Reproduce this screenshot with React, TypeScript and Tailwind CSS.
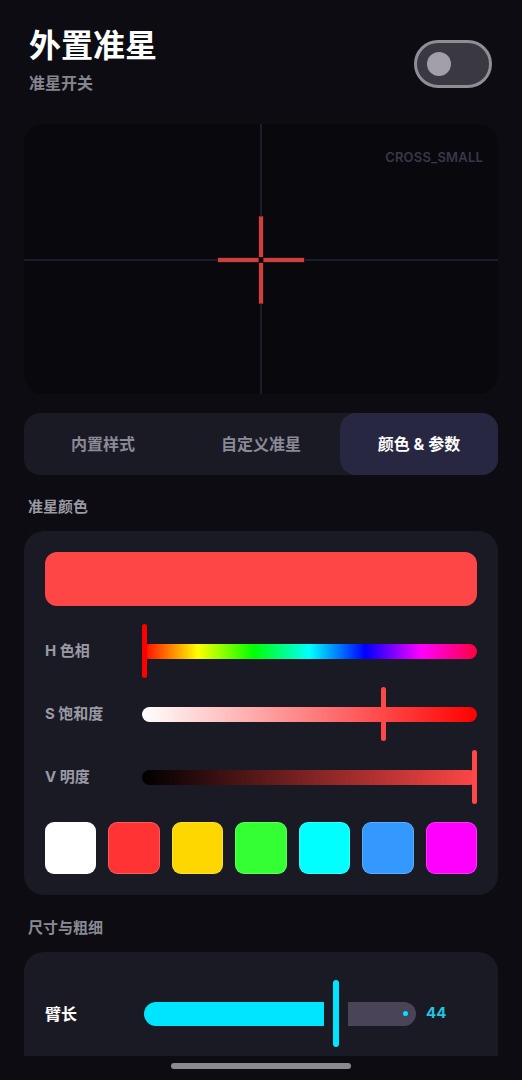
import React from "react";

const hsv = { h: 0, s: 0.725, v: 1 };

const swatches = ["#ffffff", "#ff3333", "#ffd700", "#33ff33", "#00ffff", "#3399ff", "#ff00ff"];

const tabs = ["内置样式", "自定义准星", "颜色 & 参数"];

function ColorSlider({
  label,
  track,
  value,
  thumb,
}: {
  label: string;
  track: string;
  value: number;
  thumb: string;
}) {
  return (
    <div className="flex h-[54px] items-center">
      <div className="w-[97px] text-[15px] font-bold text-[#9a9aa5]">{label}</div>
      <div className="relative flex h-full flex-1 items-center">
        <div className={`h-[15px] w-full rounded-full ${track}`} />
        <div
          className={`absolute top-0 bottom-0 w-[5px] rounded-full ${thumb}`}
          style={{ left: `calc(${value * 100}% - ${value * 5}px)` }}
        />
      </div>
    </div>
  );
}

function CrossPreview() {
  return (
    <div className="relative mt-[31px] h-[270px] overflow-hidden rounded-[20px] bg-[#08080d]">
      <svg className="absolute inset-0" width="474" height="270" viewBox="0 0 474 270">
        <line x1="237" y1="0" x2="237" y2="270" stroke="#25253a" strokeWidth="1.5" />
        <line x1="0" y1="136" x2="474" y2="136" stroke="#25253a" strokeWidth="1.5" />
        <g fill="#cc4040" stroke="#1a0a0a" strokeWidth="0.8">
          <rect x="193.5" y="133.5" width="41.5" height="5" />
          <rect x="239" y="133.5" width="41.5" height="5" />
          <rect x="234.5" y="92" width="5" height="41.5" />
          <rect x="234.5" y="138.5" width="5" height="41.5" />
        </g>
        <rect x="235.5" y="134.5" width="3" height="3" fill="#000" />
      </svg>
      <div className="absolute top-[24px] right-[15px] text-[13px] font-semibold tracking-[0.2px] text-[#383848]">
        CROSS_SMALL
      </div>
    </div>
  );
}

export default function App() {
  return (
    <div className="flex h-[1080px] w-full flex-col overflow-hidden bg-[#0c0c12] font-['Inter','Noto_Sans_CJK_SC',sans-serif]">
      <div className="flex-1 overflow-hidden px-6">
        {/* header */}
        <div className="flex items-start justify-between pt-[27px] pl-[5px] pr-[6px]">
          <div>
            <div className="text-[32px] leading-[38px] font-bold text-white">外置准星</div>
            <div className="mt-2 text-[16px] leading-5 font-bold text-[#85858f]">准星开关</div>
          </div>
          <div className="mt-[13px] flex h-[48px] w-[78px] items-center rounded-full border-[3px] border-[#8e8e98] bg-[#3a3942] pl-[10px]">
            <div className="h-6 w-6 rounded-full bg-[#a29eaa]" />
          </div>
        </div>

        <CrossPreview />

        {/* tabs */}
        <div className="mt-[19px] grid h-[62px] grid-cols-3 rounded-[16px] bg-[#1a1a25]">
          {tabs.map((t, i) => (
            <div
              key={t}
              className={
                i === 2
                  ? "flex items-center justify-center rounded-[16px] bg-[#272742] text-[16px] font-bold text-white"
                  : "flex items-center justify-center text-[16px] font-bold text-[#8a8a96]"
              }
            >
              {t}
            </div>
          ))}
        </div>

        <div className="mt-[22px] pl-1 text-[15px] leading-5 font-bold text-[#9a9aa5]">准星颜色</div>

        <div className="mt-[14px] rounded-[20px] bg-[#1a1a24] p-[21px]">
          <div className="h-[54px] rounded-[12px] bg-[#ff4646]" />
          <div className="mt-[18px] flex flex-col gap-[9px]">
            <ColorSlider
              label="H 色相"
              value={hsv.h}
              thumb="bg-[#ff0000]"
              track="bg-[linear-gradient(to_right,#ff0000,#ffff00,#00ff00,#00ffff,#0000ff,#ff00ff,#ff0040)]"
            />
            <ColorSlider
              label="S 饱和度"
              value={hsv.s}
              thumb="bg-[#ff4848]"
              track="bg-[linear-gradient(to_right,#ffffff,#ff0000)]"
            />
            <ColorSlider
              label="V 明度"
              value={hsv.v}
              thumb="bg-[#ff4848]"
              track="bg-[linear-gradient(to_right,#000000,#ff4646)]"
            />
          </div>
          <div className="mt-[18px] grid grid-cols-7 gap-3">
            {swatches.map((c) => (
              <div
                key={c}
                className="h-[52px] rounded-[9px] border border-white/20"
                style={{ backgroundColor: c }}
              />
            ))}
          </div>
        </div>

        <div className="mt-[23px] pl-1 text-[15px] leading-5 font-bold text-[#8a8a94]">尺寸与粗细</div>

        <div className="mt-[14px] h-[200px] rounded-[20px] bg-[#1a1a24] px-[21px] pt-[28px]">
          <div className="flex h-[67px] items-center">
            <div className="w-[99px] text-[16px] font-bold text-white">臂长</div>
            <div className="flex w-[272px] items-center gap-[9px]">
              <div className="h-6 w-[180px] rounded-l-full rounded-r-[3px] bg-[#00e5ff]" />
              <div className="h-[67px] w-[6px] rounded-full bg-[#00e5ff]" />
              <div className="flex h-6 flex-1 items-center justify-end rounded-l-[3px] rounded-r-full bg-[#4a4458] pr-2">
                <div className="h-[5px] w-[5px] rounded-full bg-[#00e5ff]" />
              </div>
            </div>
            <div className="ml-[10px] text-[15px] font-bold text-[#22c4e0]">44</div>
          </div>
        </div>
      </div>

      <div className="flex h-6 justify-center pt-[7px]">
        <div className="h-[6px] w-[180px] rounded-full bg-[#8a8a92]" />
      </div>
    </div>
  );
}
